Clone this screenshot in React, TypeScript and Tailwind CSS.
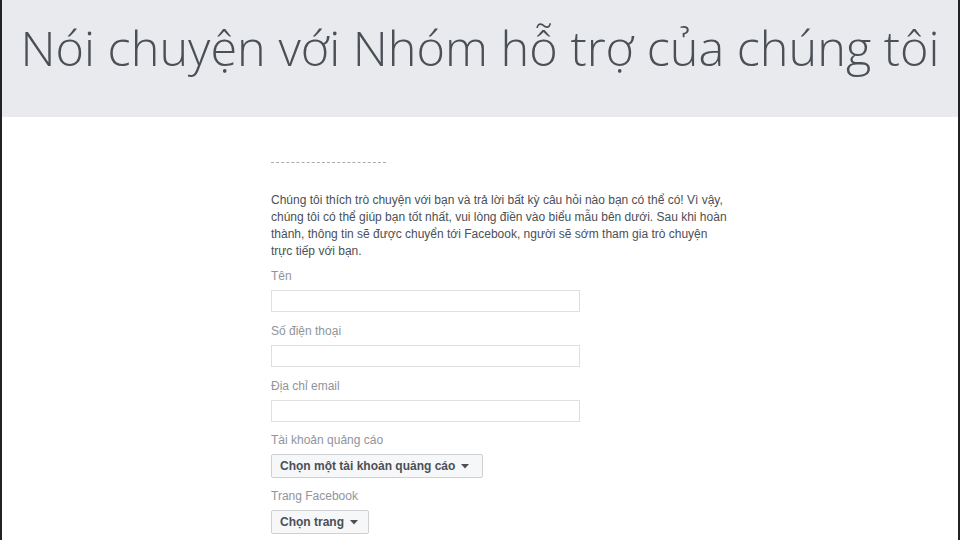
import React from "react";

function Caret() {
  return (
    <svg width="8" height="5" viewBox="0 0 8 5" className="ml-[6px] mt-[1px]">
      <path d="M0 0 L8 0 L4 4.5 Z" fill="#4b4f56" />
    </svg>
  );
}

function Field({ label }: { label: string }) {
  return (
    <div className="flex flex-col">
      <div className="text-[12px] leading-[16px] text-[#90949c] h-[16px]">{label}</div>
      <div className="w-[309px] h-[22px] border border-[#dddfe2] bg-white mt-[6px]" />
    </div>
  );
}

function SelectButton({ label, w }: { label: string; w: string }) {
  return (
    <div
      className={`${w} h-[24px] flex items-center px-[8px] border border-[#ced0d4] bg-[#f6f7f9] rounded-[2px] text-[12px] font-bold text-[#4b4f56]`}
    >
      {label}
      <Caret />
    </div>
  );
}

export default function App() {
  return (
    <div
      className="w-[960px] h-[540px] overflow-hidden bg-white border-l-2 border-r-2 border-[#222] flex flex-col"
      style={{ fontFamily: "'Liberation Sans', Arial, sans-serif" }}
    >
      <div className="h-[117px] shrink-0 bg-[#e9eaee] flex items-start justify-center pt-[13px]">
        <div
          className="text-[48.6px] leading-[68px] text-[#4b4f56] font-light whitespace-nowrap"
          style={{ fontFamily: "'Open Sans', sans-serif" }}
        >
          Nói chuyện với Nhóm hỗ trợ của chúng tôi
        </div>
      </div>
      <div className="pl-[269px] flex flex-col">
        <div className="mt-[45px] w-[115px] border-t border-dashed border-[#a8abaf]" />
        <div className="mt-[29px] text-[12px] leading-[17px] text-[#4b4f56] whitespace-nowrap flex flex-col">
          <span>Chúng tôi thích trò chuyện với bạn và trả lời bất kỳ câu hỏi nào bạn có thể có! Vì vậy,</span>
          <span>chúng tôi có thể giúp bạn tốt nhất, vui lòng điền vào biểu mẫu bên dưới. Sau khi hoàn</span>
          <span>thành, thông tin sẽ được chuyển tới Facebook, người sẽ sớm tham gia trò chuyện</span>
          <span>trực tiếp với bạn.</span>
        </div>
        <div className="mt-[8px] flex flex-col gap-[11px]">
          <Field label="Tên" />
          <Field label="Số điện thoại" />
          <Field label="Địa chỉ email" />
        </div>
        <div className="mt-[10px] flex flex-col">
          <div className="text-[12px] leading-[16px] text-[#90949c] h-[16px]">Tài khoản quảng cáo</div>
          <div className="mt-[6px]">
            <SelectButton label="Chọn một tài khoản quảng cáo" w="w-[212px]" />
          </div>
        </div>
        <div className="mt-[10px] flex flex-col">
          <div className="text-[12px] leading-[16px] text-[#90949c] h-[16px]">Trang Facebook</div>
          <div className="mt-[6px]">
            <SelectButton label="Chọn trang" w="w-[98px]" />
          </div>
        </div>
      </div>
    </div>
  );
}
